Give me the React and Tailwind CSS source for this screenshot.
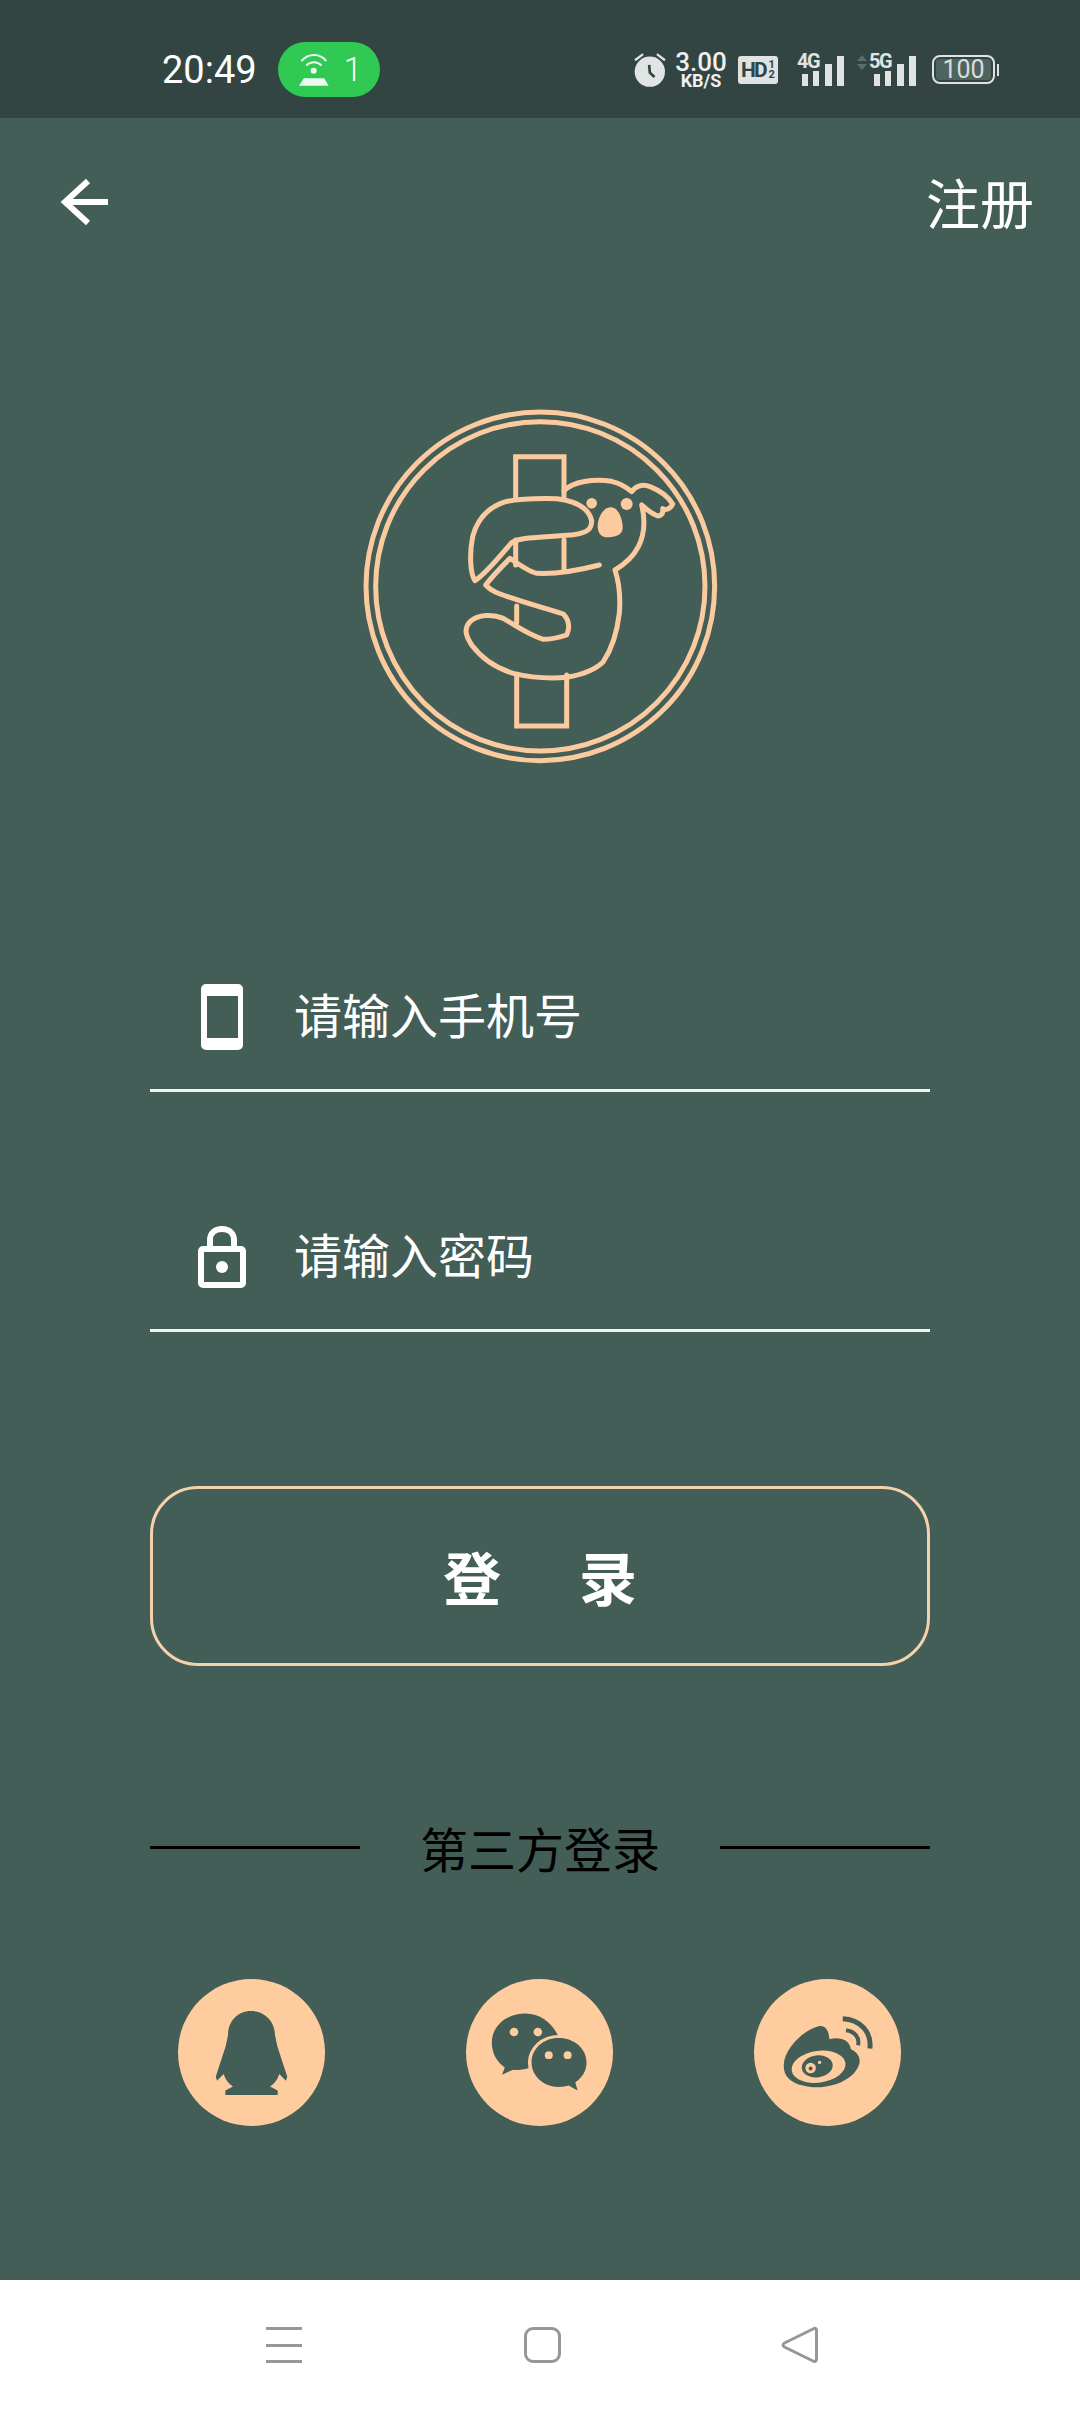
const peach = '#ffcc9f';
const green = '#435d57';

function Koala() {
    return (
        <svg width="400" height="390" viewBox="0 0 1200 1170" fill="none" stroke="#fbcb9f" strokeWidth="15" strokeLinejoin="round" strokeLinecap="round">
            <circle cx="601" cy="589" r="523" />
            <circle cx="601" cy="589" r="494" />
            <path d="M527 322V200H672V322" strokeLinejoin="miter" />
            <path d="M527 450V525M672 450V540M530 648V698" />
            <path d="M530 855V1008H680V855" strokeLinejoin="miter" />
            <path d="M405 572C390 550 388 490 398 440C410 395 440 355 490 337C530 325 600 325 650 326C700 332 745 350 755 392C755 415 745 428 700 434L620 440C570 443 535 445 515 458C495 480 440 550 405 572Z" />
            <path d="M672 302C700 275 760 265 815 274C840 280 860 292 875 305C885 290 905 280 930 290C960 302 985 320 998 342C990 360 975 360 968 356C972 375 955 382 945 374C930 368 918 355 905 345C915 385 915 430 895 470C880 500 850 525 825 540C838 580 842 620 838 670C832 720 820 770 790 815C765 840 720 855 680 862C630 866 570 862 520 850C470 835 425 805 395 765C375 735 372 715 390 695C415 672 460 672 490 685C525 705 565 735 610 748C640 748 665 740 680 735C690 715 688 690 670 672C620 655 560 640 510 622C480 612 455 605 437 585C460 555 485 530 510 505C540 525 565 545 590 550C650 553 720 540 778 525" />
            <circle cx="755" cy="340" r="16" fill="#fbcb9f" stroke="none" />
            <circle cx="860" cy="342" r="18" fill="#fbcb9f" stroke="none" />
            <path d="M812 352C835 352 848 385 848 415C848 435 825 442 800 442C780 442 772 425 773 405C775 380 790 352 812 352Z" fill="#fbcb9f" stroke="none" />
        </svg>
    );
}

function Signal({ label }) {
    return (
        <div className="relative w-[47px] h-[32px]">
            <span className="absolute left-0 top-[-3px] text-[20px] leading-[20px] font-bold tracking-[-1.5px] text-[#dfe3e2]">{label}</span>
            <div className="absolute right-0 bottom-0 flex items-end gap-[5.5px]">
                <div className="w-[6px] h-[12px] bg-[#dfe3e2]" />
                <div className="w-[6px] h-[15px] bg-[#dfe3e2]" />
                <div className="w-[7px] h-[22px] bg-[#dfe3e2]" />
                <div className="w-[7px] h-[30px] bg-[#dfe3e2]" />
            </div>
        </div>
    );
}

function StatusBar() {
    return (
        <div className="flex items-center h-[118px] pt-[21px] pl-[162px] pr-[81px] bg-[#324543] shrink-0" style={{ fontFamily: 'Roboto, sans-serif' }}>
            <span className="text-[38px] leading-[44px] text-white">20:49</span>
            <div className="flex items-center ml-[21px] w-[102px] h-[55px] pl-[21px] rounded-full bg-[#2fc954] text-white">
                <svg width="30" height="33" viewBox="868 158 88 97" fill="none" stroke="#ecf9ef">
                    <path d="M875 182C895 158 930 158 948 182" strokeWidth="6" />
                    <path d="M889 195C902 182 922 182 934 195" strokeWidth="6" />
                    <circle cx="911" cy="210" r="9" fill="#ecf9ef" stroke="none" />
                    <path d="M882 232H942L955 254H868Z" fill="#ecf9ef" stroke="none" />
                </svg>
                <span className="ml-[15px] text-[33px] leading-[40px] font-light">1</span>
            </div>
            <div className="flex items-center ml-auto">
                <svg width="32" height="34" viewBox="105 97 95 100" fill="none" className="mt-[1px]">
                    <circle cx="152" cy="152" r="45" fill="#e0e4e3" />
                    <path d="M108 118L132 100M197 118L173 100" stroke="#e0e4e3" strokeWidth="7" />
                    <path d="M150 132L152 155L166 168" stroke="#324543" strokeWidth="8" />
                </svg>
                <div className="flex flex-col items-center ml-[10px] w-[50px] text-white">
                    <span className="text-[26px] leading-[22px] font-medium text-[#eef0ef]">3.00</span>
                    <span className="text-[18px] leading-[16px] font-bold text-[#eef0ef]">KB/S</span>
                </div>
                <div className="flex items-center justify-center ml-[12px] w-[40px] h-[28px] rounded-[3px] bg-[#dfe3e2] text-[#324543] mt-[1px]">
                    <span className="text-[21px] leading-[24px] font-bold tracking-[-2px]">HD</span>
                    <span className="flex flex-col items-center ml-[3px] text-[11px] leading-[10px] font-bold">
                        <span>1</span>
                        <span>2</span>
                    </span>
                </div>
                <div className="ml-[19px]">
                    <Signal label="4G" />
                </div>
                <svg width="10" height="15" viewBox="0 0 10 15" className="ml-[13px] mb-[15px]">
                    <path d="M5 0L10 6H0ZM0 9H10L5 15Z" fill="#5a6e6a" />
                </svg>
                <div className="ml-[2px]">
                    <Signal label="5G" />
                </div>
                <div className="flex items-center ml-[16px]">
                    <div className="flex w-[63px] h-[29px] p-[2px] rounded-[8px] border-2 border-[#dfe3e2]">
                        <div className="flex items-center justify-center w-full rounded-[3px] bg-[#4f6460] text-[25px] leading-[25px] text-[#d8dedc]">100</div>
                    </div>
                    <div className="w-[2px] h-[12px] ml-[2px] bg-[#dfe3e2]" />
                </div>
            </div>
        </div>
    );
}

function Field({ icon, text }) {
    return (
        <div className="flex items-center h-[142px] pb-[6px] border-b-[3px] border-[#f2f4f3]">
            <div className="flex justify-center w-[72px] ml-[36px]">{icon}</div>
            <span className="ml-[36px] mb-[8px] text-[48px] leading-[64px] text-white">{text}</span>
        </div>
    );
}

function CircleIcon({ children, box }) {
    return (
        <div className="flex items-center justify-center w-[147px] h-[147px] rounded-full bg-[#ffcc9f] shrink-0">
            <svg width="147" height="147" viewBox={box}>{children}</svg>
        </div>
    );
}

function NavBar() {
    return (
        <div className="flex items-center h-[132px] pb-[2px] pl-[266px] bg-white shrink-0">
            <div className="flex flex-col justify-between w-[36px] h-[36px]">
                <div className="h-[3px] bg-[#979797]" />
                <div className="h-[3px] bg-[#979797]" />
                <div className="h-[3px] bg-[#979797]" />
            </div>
            <div className="w-[37px] h-[36px] ml-[222px] rounded-[9px] border-[3px] border-[#979797]" />
            <svg width="37" height="38" viewBox="0 0 37 38" fill="none" className="ml-[220px]">
                <path d="M33 2.5C34.5 2 35.5 3 35.5 4.5V33C35.5 35 34 36 32 35L3.5 21C1.5 20 1.5 18 3.5 17Z" stroke="#979797" strokeWidth="3" strokeLinejoin="round" />
            </svg>
        </div>
    );
}

export default function App() {
    return (
        <div className="flex flex-col w-[1080px] h-[2412px] bg-[#435d57]" style={{ fontFamily: '"Noto Sans CJK SC", sans-serif' }}>
            <StatusBar />

            <main className="flex-1 flex flex-col">
                <div className="flex items-center justify-between h-[168px] pl-[60px] pr-[46px]">
                    <svg width="48" height="48" viewBox="0 0 48 48" fill="none" stroke="white" strokeWidth="6">
                        <path d="M48 24H5M28 3L5 24L28 45" />
                    </svg>
                    <span className="text-[54px] leading-[72px] text-white">注册</span>
                </div>

                <div className="flex justify-center mt-[104px]">
                    <Koala />
                </div>

                <div className="flex flex-col gap-[98px] w-[780px] mx-auto mt-[170px]">
                    <Field
                        text="请输入手机号"
                        icon={
                            <svg width="42" height="66" viewBox="0 0 42 66">
                                <path fillRule="evenodd" d="M5 0H37A5 5 0 0 1 42 5V61A5 5 0 0 1 37 66H5A5 5 0 0 1 0 61V5A5 5 0 0 1 5 0ZM6 12V54H37V12Z" fill="white" />
                            </svg>
                        }
                    />
                    <Field
                        text="请输入密码"
                        icon={
                            <svg width="48" height="62" viewBox="0 0 48 62" fill="none">
                                <path d="M12 23V14C12 7 17 3 24 3C31 3 36 7 36 14V23" stroke="white" strokeWidth="6" />
                                <rect x="3" y="23" width="42" height="36" rx="2" stroke="white" strokeWidth="6" />
                                <circle cx="24" cy="41" r="6" fill="white" />
                            </svg>
                        }
                    />
                </div>

                <button className="flex items-center justify-center gap-[78px] w-[780px] h-[180px] mx-auto mt-[154px] rounded-[48px] border-[3px] border-[#f5d2ab] text-[58px] leading-[74px] font-bold text-white">
                    <span>登</span>
                    <span>录</span>
                </button>

                <div className="flex items-center w-[780px] mx-auto mt-[149px] h-[64px]">
                    <div className="w-[210px] h-[3px] bg-black" />
                    <span className="flex-1 text-center text-[48px] leading-[64px] text-black">第三方登录</span>
                    <div className="w-[210px] h-[3px] bg-black" />
                </div>

                <div className="flex justify-between w-[780px] mx-auto mt-[100px] pl-[28px] pr-[29px]">
                    <CircleIcon box="54 55 444 444">
                        <path d="M275 152C232 152 205 185 205 225L198 258L168 350L172 362L192 342C197 358 205 370 220 380L197 392V405H355V392L332 380C347 370 355 358 360 342L380 362L384 350L354 258L347 225C347 185 318 152 275 152Z" fill={green} />
                    </CircleIcon>
                    <CircleIcon box="48 58 444 444">
                        <path d="M228 162C170 162 126 200 126 250C126 285 143 310 165 325L157 347L190 332C240 335 250 325 260 300L330 240C315 195 275 162 228 162Z" fill={green} />
                        <ellipse cx="328" cy="310" rx="93" ry="83" fill={peach} />
                        <path d="M328 236C282 236 246 268 246 310C246 350 282 384 328 384C340 384 350 382 358 380L385 395L378 370C400 355 412 335 412 310C412 268 375 236 328 236Z" fill={green} />
                        <circle cx="193" cy="218" r="13" fill={peach} />
                        <circle cx="265" cy="218" r="13" fill={peach} />
                        <circle cx="298" cy="288" r="12" fill={peach} />
                        <circle cx="355" cy="288" r="12" fill={peach} />
                    </CircleIcon>
                    <CircleIcon box="42 58 444 444">
                        <path d="M132 315C135 268 190 212 240 200C265 198 268 225 270 240C300 232 330 240 335 270C365 285 372 312 342 345C300 385 230 392 190 380C150 370 130 350 132 315Z" fill={green} />
                        <ellipse cx="237" cy="323" rx="82" ry="48" transform="rotate(-8 237 323)" fill={peach} />
                        <ellipse cx="233" cy="322" rx="47" ry="33" transform="rotate(-8 233 322)" fill={green} />
                        <circle cx="213" cy="327" r="16" fill={peach} />
                        <circle cx="213" cy="328" r="6" fill={green} />
                        <circle cx="240" cy="310" r="5" fill={peach} />
                        <path d="M310 178C362 180 398 218 392 268" fill="none" stroke={green} strokeWidth="15" />
                        <path d="M320 213C346 216 362 235 356 258" fill="none" stroke={green} strokeWidth="12" />
                    </CircleIcon>
                </div>
            </main>

            <NavBar />
        </div>
    );
}
